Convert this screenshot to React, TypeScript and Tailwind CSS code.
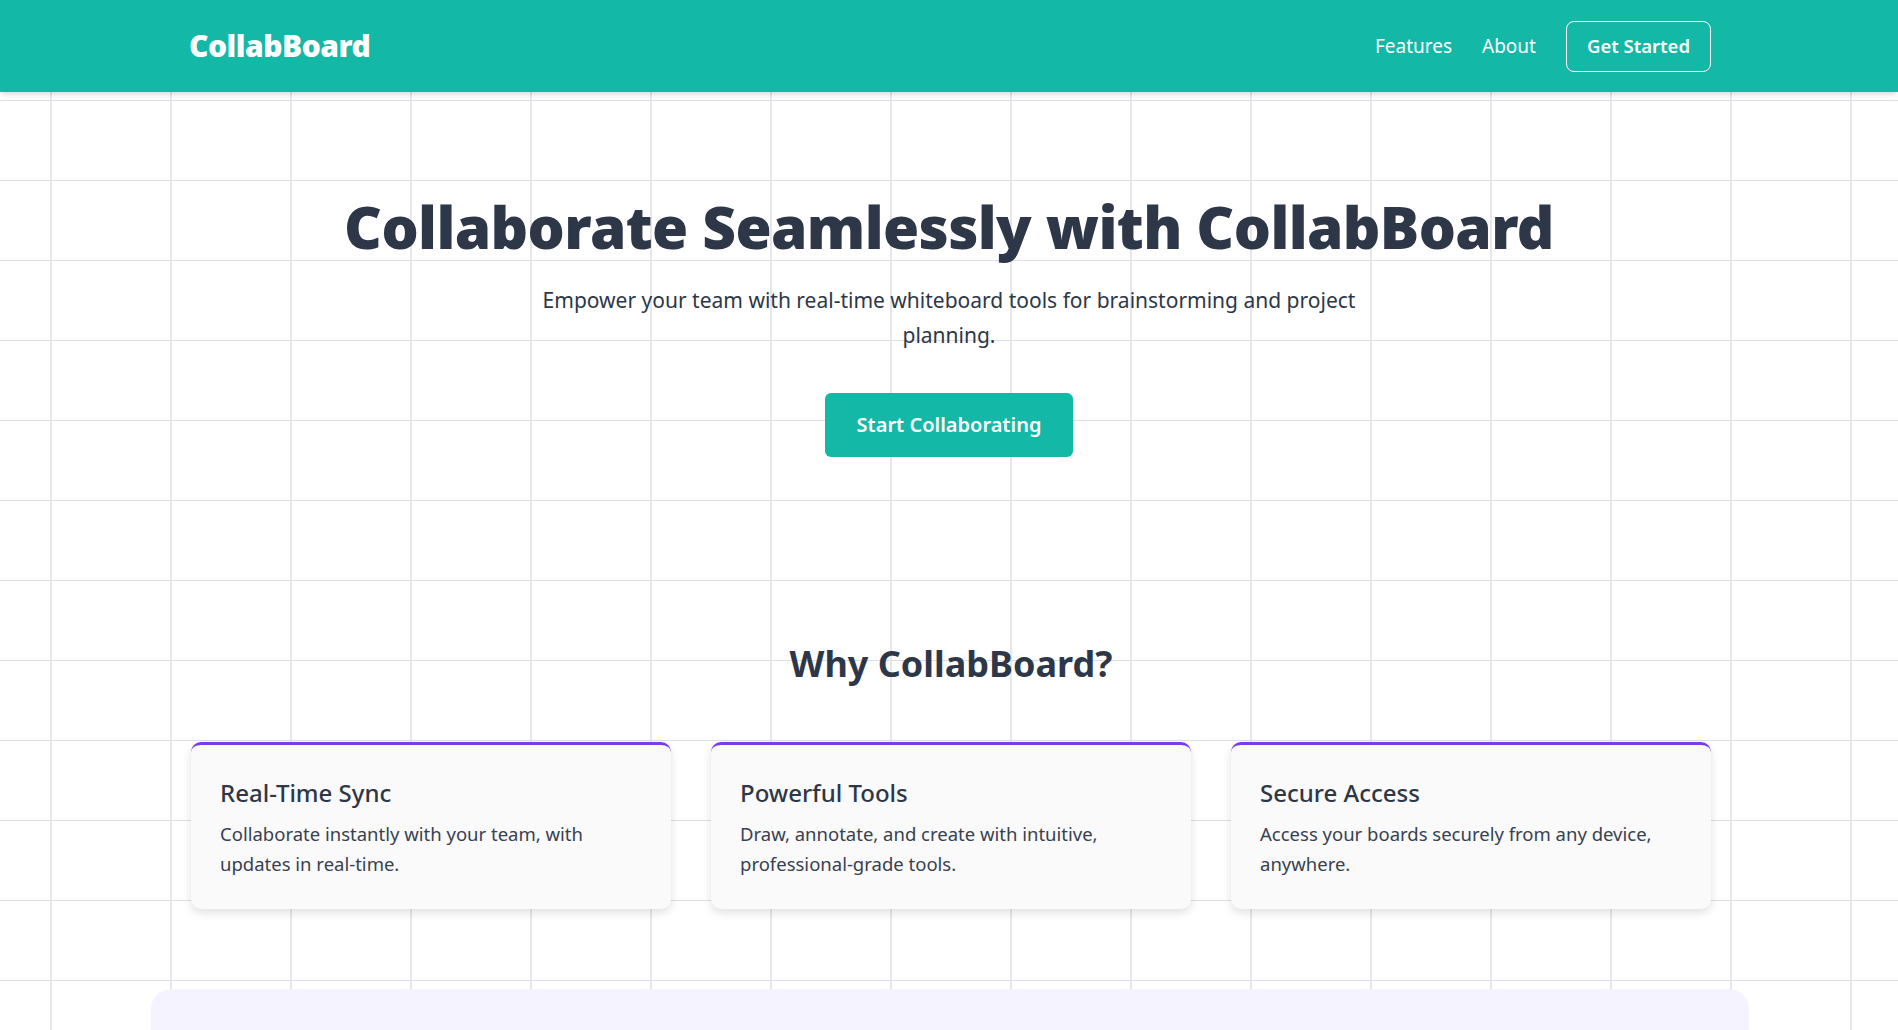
import React from 'react';

const features = [
  {
    title: 'Real-Time Sync',
    desc: 'Collaborate instantly with your team, with updates in real-time.',
  },
  {
    title: 'Powerful Tools',
    desc: 'Draw, annotate, and create with intuitive, professional-grade tools.',
  },
  {
    title: 'Secure Access',
    desc: 'Access your boards securely from any device, anywhere.',
  },
];

export default function App() {
  return (
    <div
      className="min-h-screen bg-white bg-[linear-gradient(to_right,#e6e6eb_2px,transparent_2px),linear-gradient(to_bottom,#dedde5_1px,transparent_1px)] bg-[size:120px_80px] bg-[position:50px_20px] text-[#2d3748]"
      style={{ fontFamily: '"Noto Sans", "Open Sans", sans-serif' }}
    >
      {/* Header */}
      <header className="bg-[#14b8a6] shadow-md shadow-black/10 relative z-10">
        <div className="max-w-[1600px] mx-auto pl-10 pr-[38px] h-[92px] flex items-center justify-between">
          <a href="#" className="text-white text-[30px] font-black tracking-[-0.5px] leading-none">
            CollabBoard
          </a>
          <nav className="flex items-center gap-[30px]">
            <a href="#features" className="text-white text-[19px] leading-none">
              Features
            </a>
            <a href="#about" className="text-white text-[19px] leading-none">
              About
            </a>
            <button className="h-[51px] px-[20px] border border-white rounded-lg text-white text-[18.5px] font-semibold">
              Get Started
            </button>
          </nav>
        </div>
      </header>

      {/* Hero */}
      <section className="pt-24 pb-24 text-center">
        <div className="max-w-[1600px] mx-auto px-10 flex flex-col items-center">
          <h1 className="text-[58.5px] leading-[77px] font-black tracking-[-0.6px] text-[#2d3748]">
            Collaborate Seamlessly with CollabBoard
          </h1>
          <p className="mt-[18px] max-w-[860px] text-[21px] leading-[35px] text-[#2d3748]">
            Empower your team with real-time whiteboard tools for brainstorming and project planning.
          </p>
          <button className="mt-10 h-16 px-8 rounded-md bg-[#14b8a6] text-white text-[20px] font-semibold">
            Start Collaborating
          </button>
        </div>
      </section>

      {/* Features */}
      <section id="features" className="pt-[88px] pb-20">
        <div className="max-w-[1600px] mx-auto pl-[42px] pr-[38px]">
          <h2 className="text-center text-[36px] leading-[45px] font-bold text-[#2d3748] mb-14">
            Why CollabBoard?
          </h2>
          <div className="grid grid-cols-3 gap-10">
            {features.map((f) => (
              <div
                key={f.title}
                className="bg-[#fafafa] border-t-[3px] border-[#7c3aed] rounded-[10px] px-[29px] pt-[30px] pb-[30px] shadow-[0_4px_10px_rgba(0,0,0,0.12)]"
              >
                <h3 className="text-[24px] leading-9 font-medium text-[#2d3748]">{f.title}</h3>
                <p className="mt-2 text-[18.5px] leading-[30px] text-[#374151]">{f.desc}</p>
              </div>
            ))}
          </div>
        </div>
      </section>

      {/* About */}
      <section id="about" className="max-w-[1600px] mx-auto pl-[2px]">
        <div className="bg-[#f5f3ff] rounded-[20px] h-72"></div>
      </section>
    </div>
  );
}
